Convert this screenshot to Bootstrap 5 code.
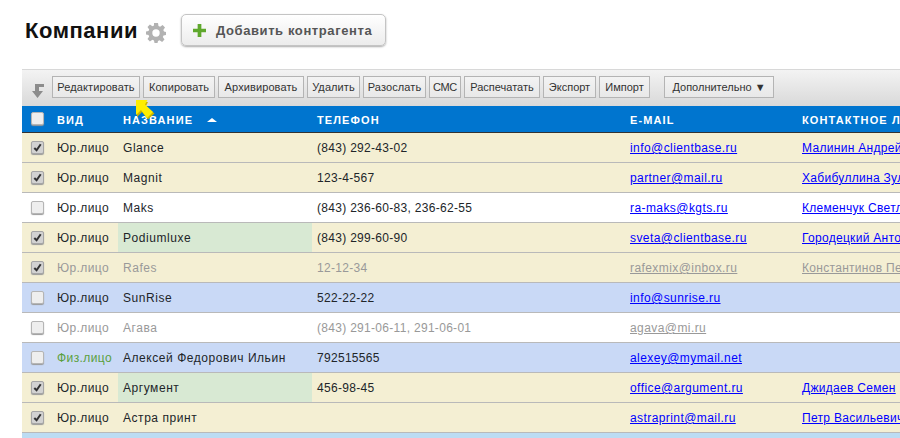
<!DOCTYPE html>
<html lang="ru">
<head>
  <meta charset="UTF-8" />
  <title>Компании</title>
  <link href="https://cdn.jsdelivr.net/npm/bootstrap@5.3.0/dist/css/bootstrap.min.css" rel="stylesheet">
  <style>
    html, body { height: 438px; overflow: hidden; }
    body { background: #fff; font-family: "Liberation Sans", Arial, sans-serif; font-size: 12px; color: #000; }
    .page-wrap { width: 1100px; padding-left: 22px; position: relative; }
    .head-row { height: 69px; padding-top: 14px; align-items: flex-start; }
    .page-title { font: bold 22px/34px "Liberation Sans", Arial, sans-serif; margin: 0 0 0 3px; color: #111; letter-spacing: .55px; }
    .gear-ico { margin: 9px 15px 0 8px; }
    .btn-add { width: 205px; height: 32px; padding: 0 2px 0 0; gap: 10px; border: 1px solid #c4c4c4; border-radius: 5px; background: linear-gradient(#fff, #ececec); box-shadow: 0 1px 2px #aaa; color: #555; font: bold 13px "Liberation Sans", Arial, sans-serif; letter-spacing: .6px; }
    .tools { height: 37px; padding: 6px 0 0 30px; gap: 3px; border-top: 1px solid #d8d8d8; background: linear-gradient(#f3f3f3, #d9d9d9); }
    .tool-arrow { position: absolute; left: 31px; top: 84px; }
    .btn-tool { height: 22px; padding: 0; border: 1px solid #b4b4b4; border-radius: 0; background: linear-gradient(#f3f3f3, #e8e8e8); color: #333; font: 11px/20px "Liberation Sans", Arial, sans-serif; letter-spacing: .1px; }
    .btn-tool:nth-child(1) { width: 88px; }
    .btn-tool:nth-child(2) { width: 72px; }
    .btn-tool:nth-child(3) { width: 86px; }
    .btn-tool:nth-child(4) { width: 53px; }
    .btn-tool:nth-child(5) { width: 63px; }
    .btn-tool:nth-child(6) { width: 32px; letter-spacing: -.3px; }
    .btn-tool:nth-child(7) { width: 76px; letter-spacing: 0; }
    .btn-tool:nth-child(8) { width: 53px; letter-spacing: 0; }
    .btn-tool:nth-child(9) { width: 51px; letter-spacing: 0; }
    .btn-tool.btn-more { margin-left: 11px; width: 110px; letter-spacing: 0; }
    .yellow-arrow { position: absolute; left: 135px; top: 99px; }
    .crm-table { table-layout: fixed; width: 1078px; margin: 0; border-collapse: collapse; }
    .crm-table > :not(caption) > * > * { padding: 2px 0 0 5px; height: 30px; font-size: 12px; letter-spacing: .3px; background: transparent; box-shadow: none; color: inherit; border-bottom: 1px solid #b9b9b9; vertical-align: middle; white-space: nowrap; overflow: hidden; }
    .crm-table > thead > tr > th { height: 26px; background: #0075cf; color: #fff; font-size: 11px; letter-spacing: 1.1px; border-bottom: 1px solid #333; }
    .crm-table > tbody > tr > td:nth-child(2) { letter-spacing: .4px; }
    .crm-table > tbody > tr > td:nth-child(3) { letter-spacing: .55px; }
    .crm-table > tbody > tr > td:nth-child(5) { letter-spacing: .42px; }
    .crm-table > * > tr > .c-kind { padding-left: 7px; }
    .crm-table > * > tr > .c-check { padding: 0 0 0 9px; }
    .form-check-input.crm-check { display: block; width: 13px; height: 13px; margin: 0; border: 1px solid #b5b5b5; border-radius: 2px; background-color: #eee; box-shadow: 0 1px 1px #999; }
    .form-check-input.crm-check:checked { background-color: #d2d2d2; border-color: #a5a5a5; background-size: 11px; background-image: url("data:image/svg+xml,%3csvg xmlns='http://www.w3.org/2000/svg' viewBox='0 0 12 12'%3e%3cpath fill='none' stroke='%23333' stroke-width='2.2' d='M2.5 6.5l2.5 2.5 4.500-6.500'/%3e%3c/svg%3e"); }
    tr.r-tan { background: #f4efd3; }
    tr.r-blue { background: #c9d9f6; }
    tr.r-sky { background: #bcdcf3; }
    tr.r-white { background: #fff; }
    .crm-table > tbody > tr > td.c-green { background: #d8e9d3; }
    .crm-table a { color: #00f; }
    tr.r-off td, tr.r-off a { color: #999; }
    .fiz-lico { color: #5a9f3c; }
    .sort-up { display: inline-block; margin-left: 10px; vertical-align: 2px; border: 4px solid transparent; border-top: 0; border-bottom: 4px solid #fff; border-left-width: 5px; border-right-width: 5px; }
  </style>
</head>
<body>
  <div class="page-wrap">
    <div class="head-row d-flex">
      <h1 class="page-title">Компании</h1>
      <svg class="gear-ico" width="20" height="20" viewBox="0 0 20 20"><path fill="#b2b2b2" fill-rule="evenodd" d="M8 0h4l.5 3 1.600.7L16.600 2 19 4.400 17.300 6.900l.7 1.600 2 .5v3l-2.500.5-.7 1.600 1.700 2.500L16.100 19l-2.500-1.700-1.600.7-.5 2H8.500L8 17.500l-1.600-.7L3.900 18.500 1.500 16.100l1.700-2.500-.7-1.600L0 11.500v-3l2.500-.5.7-1.600L1.500 3.900 3.900 1.500l2.500 1.700L8 2.500zM10 6.300a3.700 3.700 0 1 0 0 7.400 3.700 3.700 0 0 0 0-7.400z"/></svg>
      <button class="btn btn-add d-flex align-items-center justify-content-center" type="button">
        <svg width="13" height="13" viewBox="0 0 14 14"><path fill="#5fa82d" d="M5 0h4v5h5v4H9v5H5V9H0V5h5z"/></svg>
        Добавить контрагента
      </button>
    </div>

    <div class="tools d-flex align-items-start">
      <button class="btn btn-tool" type="button">Редактировать</button>
      <button class="btn btn-tool" type="button">Копировать</button>
      <button class="btn btn-tool" type="button">Архивировать</button>
      <button class="btn btn-tool" type="button">Удалить</button>
      <button class="btn btn-tool" type="button">Разослать</button>
      <button class="btn btn-tool" type="button">СМС</button>
      <button class="btn btn-tool" type="button">Распечатать</button>
      <button class="btn btn-tool" type="button">Экспорт</button>
      <button class="btn btn-tool" type="button">Импорт</button>
      <button class="btn btn-tool btn-more" type="button">Дополнительно ▼</button>
    </div>
    <svg class="tool-arrow" width="14" height="14" viewBox="0 0 14 14"><path fill="#8c8c8c" d="M4 0h9v3H8v4h4l-5.500 7L1 7h3z"/></svg>
    <svg class="yellow-arrow" width="20" height="21" viewBox="0 0 20 21"><path fill="#c9b400" d="M2 3h11l-2 4 8.500 7.500L13 20.500 7 13l-5 5z"/><path fill="#ffee00" d="M1 1h11.500L10 5.500 18 13l-6 6-6-8-5 5z"/></svg>

    <table class="table crm-table">
      <colgroup><col style="width:28px"><col style="width:68px"><col style="width:194px"><col style="width:313px"><col style="width:172px"><col></colgroup>
      <thead>
        <tr>
          <th class="c-check"><input class="form-check-input crm-check" type="checkbox"></th>
          <th class="c-kind">ВИД</th>
          <th>НАЗВАНИЕ <span class="sort-up"></span></th>
          <th>ТЕЛЕФОН</th>
          <th>E-MAIL</th>
          <th>КОНТАКТНОЕ ЛИЦО</th>
        </tr>
      </thead>
      <tbody id="rows"></tbody>
    </table>
  </div>

  <script>
    const data = [
      ["r-tan", 1, "Юр.лицо", "Glance", "(843) 292-43-02", "info@clientbase.ru", "Малинин Андрей Петрович"],
      ["r-tan", 1, "Юр.лицо", "Magnit", "123-4-567", "partner@mail.ru", "Хабибуллина Зульфия"],
      ["r-white", 0, "Юр.лицо", "Maks", "(843) 236-60-83, 236-62-55", "ra-maks@kgts.ru", "Клеменчук Светлана"],
      ["r-tan c", 1, "Юр.лицо", "Podiumluxe", "(843) 299-60-90", "sveta@clientbase.ru", "Городецкий Антон"],
      ["r-tan r-off", 1, "Юр.лицо", "Rafes", "12-12-34", "rafexmix@inbox.ru", "Константинов Петр"],
      ["r-blue", 0, "Юр.лицо", "SunRise", "522-22-22", "info@sunrise.ru", ""],
      ["r-white r-off", 0, "Юр.лицо", "Агава", "(843) 291-06-11, 291-06-01", "agava@mi.ru", ""],
      ["r-blue", 0, "Физ.лицо", "Алексей Федорович Ильин", "792515565", "alexey@mymail.net", ""],
      ["r-tan c", 1, "Юр.лицо", "Аргумент", "456-98-45", "office@argument.ru", "Джидаев Семен"],
      ["r-tan", 1, "Юр.лицо", "Астра принт", "", "astraprint@mail.ru", "Петр Васильевич"],
      ["r-sky", 0, "", "", "", "", ""]
    ];
    document.getElementById("rows").innerHTML = data.map(r => {
      const kind = r[2] === "Физ.лицо" ? `<span class="fiz-lico">${r[2]}</span>` : r[2];
      const green = r[0].endsWith(" c") ? ' class="c-green"' : "";
      const box = r[2] ? `<input class="form-check-input crm-check" type="checkbox"${r[1] ? " checked" : ""}>` : "";
      return `<tr class="${r[0]}">
        <td class="c-check">${box}</td>
        <td class="c-kind">${kind}</td>
        <td${green}>${r[3]}</td>
        <td>${r[4]}</td>
        <td>${r[5] ? `<a href="#">${r[5]}</a>` : ""}</td>
        <td>${r[6] ? `<a href="#">${r[6]}</a>` : ""}</td>
      </tr>`;
    }).join("");
  </script>
  <script src="https://cdn.jsdelivr.net/npm/bootstrap@5.3.0/dist/js/bootstrap.bundle.min.js"></script>
</body>
</html>
